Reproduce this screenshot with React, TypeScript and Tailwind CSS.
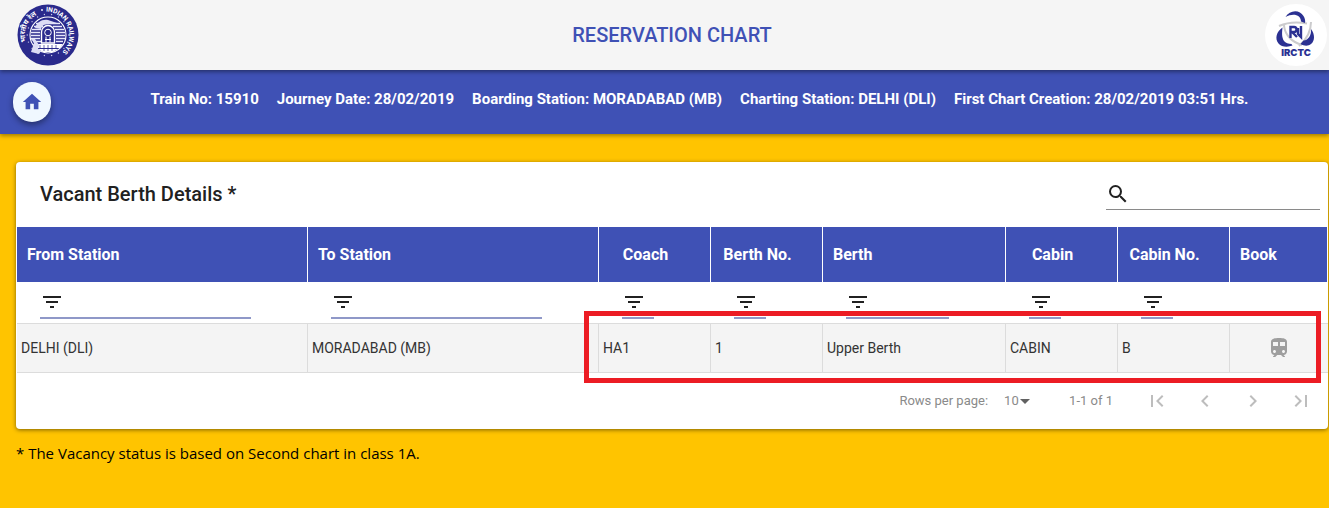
import {
  MdArrowDropDown,
  MdChevronLeft,
  MdChevronRight,
  MdFilterList,
  MdFirstPage,
  MdHome,
  MdLastPage,
  MdSearch,
  MdTrain,
} from 'react-icons/md';

const JOURNEY: ReadonlyArray<{ label: string; value: string }> = [
  { label: 'Train No', value: '15910' },
  { label: 'Journey Date', value: '28/02/2019' },
  { label: 'Boarding Station', value: 'MORADABAD (MB)' },
  { label: 'Charting Station', value: 'DELHI (DLI)' },
  { label: 'First Chart Creation', value: '28/02/2019 03:51 Hrs.' },
];

type Column = { title: string; width: string; head: string; filter: boolean };

const LEFT = 'pl-2.5 text-left';
const CENTER = 'pl-2.5 pr-7 text-center';

const COLUMNS: ReadonlyArray<Column> = [
  { title: 'From Station', width: '', head: LEFT, filter: true },
  { title: 'To Station', width: '', head: LEFT, filter: true },
  { title: 'Coach', width: 'w-[112px]', head: CENTER, filter: true },
  { title: 'Berth No.', width: 'w-[112px]', head: CENTER, filter: true },
  { title: 'Berth', width: 'w-[183px]', head: LEFT, filter: true },
  { title: 'Cabin', width: 'w-[112px]', head: CENTER, filter: true },
  { title: 'Cabin No.', width: 'w-[112px]', head: CENTER, filter: true },
  { title: 'Book', width: 'w-[98px]', head: LEFT, filter: false },
];

const ROWS: ReadonlyArray<ReadonlyArray<string>> = [
  ['DELHI (DLI)', 'MORADABAD (MB)', 'HA1', '1', 'Upper Berth', 'CABIN', 'B'],
];

function RailwaysLogo() {
  const dots = Array.from({ length: 18 }, (_, i) => (i * 20 * Math.PI) / 180);
  return (
    <svg viewBox="0 0 62 62" className="size-[62px] overflow-visible" role="img" aria-label="Indian Railways">
      <defs>
        <path id="ring-en" d="M29 7.6A23.5 23.5 0 0 1 31 54.500" />
        <path id="ring-hi" d="M9 38A23 23 0 0 1 31 8" />
      </defs>
      <circle cx="31" cy="31" r="30.5" fill="#2a2a8c" />
      <text fontFamily="Roboto, sans-serif" fontSize="6.6" fontWeight="700" fill="#fff">
        <textPath href="#ring-en">INDIAN RAILWAYS</textPath>
      </text>
      <text fontFamily="'Noto Sans', 'Noto Sans Devanagari', sans-serif" fontSize="7" fontWeight="700" fill="#fff">
        <textPath href="#ring-hi">भारतीय रेल</textPath>
      </text>
      <circle cx="25" cy="6" r="0.9" fill="#fff" />
      {dots.map((a) => (
        <circle key={a} cx={31 + 20.8 * Math.cos(a)} cy={31 + 20.8 * Math.sin(a)} r="0.7" fill="#c9c9ea" />
      ))}
      <circle cx="31" cy="31" r="18" fill="#2a2a8c" stroke="#fff" strokeWidth="1.1" />
      <path
        d="M17 22.500h9M36 22.500h9M15 25.500h9M38 25.500h9M14 28.500h9M39 28.500h9M14 31.500h9M39 31.500h9M14 34.500h9M39 34.500h9M16 37.500h8M39 37.500h7M19 19.500h24"
        stroke="#e8e8fa"
        strokeWidth="1.7"
      />
      <path d="M18 24c2-6 7-9 13-8l9 3-8 1c-4 0-7 1-8 5z" fill="#dcdcf4" />
      <path d="M24.500 39V28a6.500 6.500 0 0 1 13 0v11z" fill="#2a2a8c" stroke="#fff" strokeWidth="1.4" />
      <circle cx="31" cy="28.500" r="3.300" fill="none" stroke="#fff" strokeWidth="1" />
      <path d="M28 35.500h6M29 38.500v-6M33 38.500v-6" stroke="#fff" strokeWidth="1" />
      <path d="M16 40h30l-3 4H19zM21 45h20l-5 3H26z" fill="#fff" />
      <path d="M23 41v3M27 41v6M31 41v6M35 41v6M39 41v3" stroke="#2a2a8c" strokeWidth="0.7" />
      <path d="M14 35l3 4-3 9 8 2 2-3-3-2 1-4-4-6z" fill="#dcdcf4" />
    </svg>
  );
}

function IrctcLogo() {
  return (
    <svg viewBox="0 0 62 62" className="size-[62px]" role="img" aria-label="IRCTC">
      <circle cx="31" cy="31" r="31" fill="#fff" />
      <g fill="none" stroke="#cbcbcd" strokeWidth="2">
        <path d="M14 22c9-4 20-4 28-2.500" />
        <path d="M46 18c0 9-5 18-12 24" />
        <path d="M19 20c0 8 5 16 14 19.500l4 1.500" />
      </g>
      <g fill="#2b3192">
        <path d="M20.500 13c4-7 14-8 18-1 1.500 2.500 2 5 1.500 7l-4-1.500c0-6-7-9-15.500-4.500z" />
        <path d="M17.500 23.500c-6 4-8 11-4 16 3 3.500 9 4 14 2l-1-1.500c-3 0-6-1-7.500-3-2.500-4-2-9-1.500-13.500z" />
        <path d="M46 25c4 5 4 12 0 15-3 2.500-7 2-10.500 0l3-3.500c5-.5 8-5 7.500-11.500z" />
      </g>
      <g fill="none" stroke="#2b3192" strokeWidth="2.400">
        <path d="M25.500 34V23h3.500q2.500 0 2.500 2.500t-2.500 2.500h-2l5 5" />
        <path d="M33 24v6l3 3V22" />
      </g>
      <text
        x="31"
        y="51.500"
        textAnchor="middle"
        fontFamily="Inter, sans-serif"
        fontSize="9.5"
        fontWeight="900"
        fill="#2b3192"
      >
        IRCTC
      </text>
    </svg>
  );
}

function JourneyBar() {
  return (
    <div className="flex h-16 items-center bg-[#3f51b5] px-[13px] shadow-[0_2px_4px_rgba(0,0,0,0.35)]">
      <button
        type="button"
        aria-label="Home"
        className="flex h-10 w-[38px] shrink-0 items-center justify-center rounded-full bg-[#f0f8ff] text-[#3f51b5] shadow-[0_3px_6px_rgba(0,0,0,0.4)]"
      >
        <MdHome size={22} />
      </button>
      <ul className="flex flex-1 justify-center gap-[18px] pb-1.5 pl-8 text-[15px] leading-5 font-bold text-white">
        {JOURNEY.map((item) => (
          <li key={item.label} className="whitespace-nowrap">
            {item.label}: {item.value}
          </li>
        ))}
      </ul>
    </div>
  );
}

function BerthTable() {
  return (
    <div className="pl-px">
      <table className="w-full table-fixed border-separate border-spacing-0">
        <colgroup>
          {COLUMNS.map((col) => (
            <col key={col.title} className={col.width} />
          ))}
        </colgroup>
        <thead>
          <tr className="h-[57px]">
            {COLUMNS.map((col) => (
              <th
                key={col.title}
                scope="col"
                className={`border-y border-r border-white bg-[#3f51b5] p-0 text-base font-bold text-white ${col.head}`}
              >
                {col.title}
              </th>
            ))}
          </tr>
        </thead>
        <tbody>
          <tr className="h-10">
            {COLUMNS.map((col) => (
              <td key={col.title} className="py-1 pr-[57px] pl-[23px] align-bottom">
                {col.filter && (
                  <label className="flex h-8 items-center border-b-2 border-[#8f98c8]">
                    <MdFilterList size={24} className="shrink-0" />
                    <input
                      type="text"
                      aria-label={`Filter by ${col.title}`}
                      className="w-full min-w-0 bg-transparent text-sm outline-none"
                    />
                  </label>
                )}
              </td>
            ))}
          </tr>
          {ROWS.map((row) => (
            <tr key={row.join()} className="h-[50px] bg-[#f4f4f4] text-sm text-[#333333]">
              {row.map((value, i) => (
                <td key={COLUMNS[i].title} className="border-y border-r border-[#dcdcdc] py-0 pr-1 pl-1">
                  {value}
                </td>
              ))}
              <td className="border-y border-[#dcdcdc] p-0">
                <button type="button" aria-label="Book berth" className="flex w-full justify-center text-[#9e9e9e]">
                  <MdTrain size={24} />
                </button>
              </td>
            </tr>
          ))}
        </tbody>
      </table>
    </div>
  );
}

function Pagination() {
  const buttons = [
    { label: 'First page', Icon: MdFirstPage },
    { label: 'Previous page', Icon: MdChevronLeft },
    { label: 'Next page', Icon: MdChevronRight },
    { label: 'Last page', Icon: MdLastPage },
  ];
  return (
    <div className="flex h-14 items-center justify-end pr-[3px] text-[13px] text-[#8a8a8a]">
      <label htmlFor="rows-per-page">Rows per page:</label>
      <div className="ml-4 flex items-center">
        <select id="rows-per-page" className="appearance-none bg-transparent outline-none" defaultValue="10">
          <option>5</option>
          <option>10</option>
          <option>20</option>
        </select>
        <MdArrowDropDown size={24} className="-ml-1.5 text-[#616161]" />
      </div>
      <span className="ml-8">1-1 of 1</span>
      <div className="ml-5 flex">
        {buttons.map(({ label, Icon }) => (
          <button
            key={label}
            type="button"
            aria-label={label}
            disabled
            className="flex size-12 items-center justify-center text-[#bdbdbd]"
          >
            <Icon size={24} />
          </button>
        ))}
      </div>
    </div>
  );
}

export default function App() {
  return (
    <div className="min-h-screen bg-[#ffc400] font-['Roboto',sans-serif] text-[#212121]">
      <header className="relative z-10 flex h-[70px] items-center justify-between bg-[#f5f5f5] pr-0.5 pl-[17px] shadow-[0_2px_4px_rgba(0,0,0,0.4)]">
        <RailwaysLogo />
        <h1 className="text-xl font-medium text-[#3f51b5]">RESERVATION CHART</h1>
        <IrctcLogo />
      </header>
      <JourneyBar />
      <main className="pt-7 pr-px pl-4">
        <section className="relative rounded bg-white shadow-[0_1px_4px_rgba(0,0,0,0.5)]">
          <div className="flex h-16 items-center justify-between pr-2 pl-6">
            <h2 className="text-xl font-medium">Vacant Berth Details *</h2>
            <label className="flex h-8 w-[214px] items-center border-b border-[#8a8a8a]">
              <MdSearch size={24} className="shrink-0" />
              <input type="search" aria-label="Search" className="w-full min-w-0 bg-transparent text-sm outline-none" />
            </label>
          </div>
          <BerthTable />
          <Pagination />
          {/* highlights the vacant berth, coach to book button */}
          <div className="pointer-events-none absolute top-[149px] right-[7px] h-[72px] w-[737px] border-[5px] border-[#ec1c24]" />
        </section>
        <p className="pt-3 font-['Open_Sans',sans-serif] text-[15px] leading-6 text-black">
          * The Vacancy status is based on Second chart in class 1A.
        </p>
      </main>
    </div>
  );
}
